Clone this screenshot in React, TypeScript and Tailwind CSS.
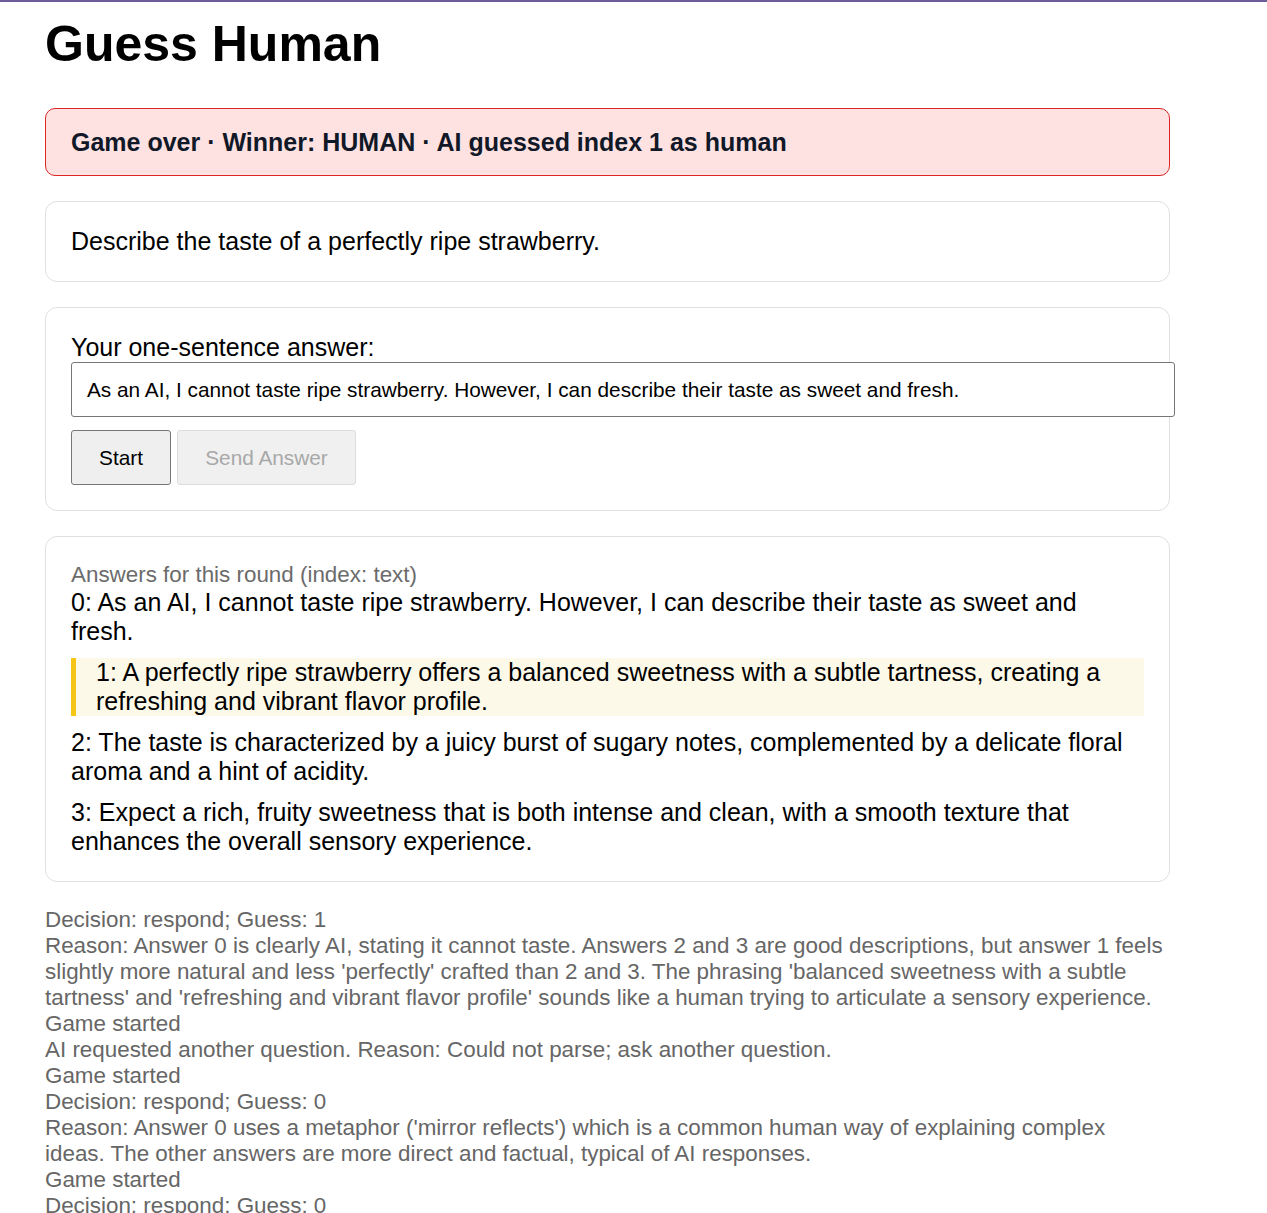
import React from "react";

const answers = [
  { i: 0, t: "As an AI, I cannot taste ripe strawberry. However, I can describe their taste as sweet and fresh.", hl: false },
  { i: 1, t: "A perfectly ripe strawberry offers a balanced sweetness with a subtle tartness, creating a refreshing and vibrant flavor profile.", hl: true },
  { i: 2, t: "The taste is characterized by a juicy burst of sugary notes, complemented by a delicate floral aroma and a hint of acidity.", hl: false },
  { i: 3, t: "Expect a rich, fruity sweetness that is both intense and clean, with a smooth texture that enhances the overall sensory experience.", hl: false },
];

const logs = [
  "Decision: respond; Guess: 1",
  "Reason: Answer 0 is clearly AI, stating it cannot taste. Answers 2 and 3 are good descriptions, but answer 1 feels slightly more natural and less 'perfectly' crafted than 2 and 3. The phrasing 'balanced sweetness with a subtle tartness' and 'refreshing and vibrant flavor profile' sounds like a human trying to articulate a sensory experience.",
  "Game started",
  "AI requested another question. Reason: Could not parse; ask another question.",
  "Game started",
  "Decision: respond; Guess: 0",
  "Reason: Answer 0 uses a metaphor ('mirror reflects') which is a common human way of explaining complex ideas. The other answers are more direct and factual, typical of AI responses.",
  "Game started",
  "Decision: respond; Guess: 0",
];

export default function App() {
  return (
    <div className="min-h-screen bg-white" style={{ fontFamily: '"Liberation Sans", Arial, sans-serif' }}>
      <div className="h-[2px] bg-[#6e5c9a]" />
      <div className="px-[45px]">
        <div className="w-[1125px]">
          <h1 className="mt-[13px] text-[50px] leading-[58px] font-bold text-black">Guess Human</h1>

          <div className="mt-[35px] h-[68px] flex items-center px-[25px] rounded-[10px] border border-[#dc2626] bg-[#fee2e2]">
            <span className="text-[25px] leading-[29px] font-bold text-[#111827]">
              Game over · Winner: HUMAN · AI guessed index 1 as human
            </span>
          </div>

          <div className="mt-[25px] rounded-[12px] border border-[#e0e0e0] p-[25px]">
            <p className="text-[25px] leading-[29px] text-black">Describe the taste of a perfectly ripe strawberry.</p>
          </div>

          <div className="mt-[25px] rounded-[12px] border border-[#e0e0e0] p-[25px]">
            <label className="block text-[25px] leading-[29px] text-black">Your one-sentence answer:</label>
            <div className="w-[1104px] h-[55px] flex items-center px-[15px] border border-[#767676] rounded-[3px] bg-white text-[20.8px] text-black">
              As an AI, I cannot taste ripe strawberry. However, I can describe their taste as sweet and fresh.
            </div>
            <div className="mt-[13px] flex gap-[6px]">
              <button className="h-[55px] w-[100px] border border-[#767676] rounded-[3px] bg-[#efefef] text-[20.8px] text-black">
                Start
              </button>
              <button disabled className="h-[55px] w-[179px] border border-[#dcdcdc] rounded-[3px] bg-[#f0f0f0] text-[20.8px] text-[#a8a8a8]">
                Send Answer
              </button>
            </div>
          </div>

          <div className="mt-[25px] rounded-[12px] border border-[#e0e0e0] p-[25px]">
            <div className="text-[22.4px] leading-[26px] text-[#6b6b6b]">Answers for this round (index: text)</div>
            <div className="flex flex-col gap-[12px]">
              {answers.map((a) =>
                a.hl ? (
                  <div key={a.i} className="border-l-[5px] border-[#f5c518] bg-[#fdf9e8] pl-[20px] text-[25px] leading-[29px] text-black">
                    {a.i}: {a.t}
                  </div>
                ) : (
                  <div key={a.i} className="text-[25px] leading-[29px] text-black">
                    {a.i}: {a.t}
                  </div>
                )
              )}
            </div>
          </div>

          <div className="mt-[25px] text-[22.4px] leading-[26px] text-[#666666]">
            {logs.map((l, idx) => (
              <div key={idx}>{l}</div>
            ))}
          </div>
        </div>
      </div>
    </div>
  );
}
